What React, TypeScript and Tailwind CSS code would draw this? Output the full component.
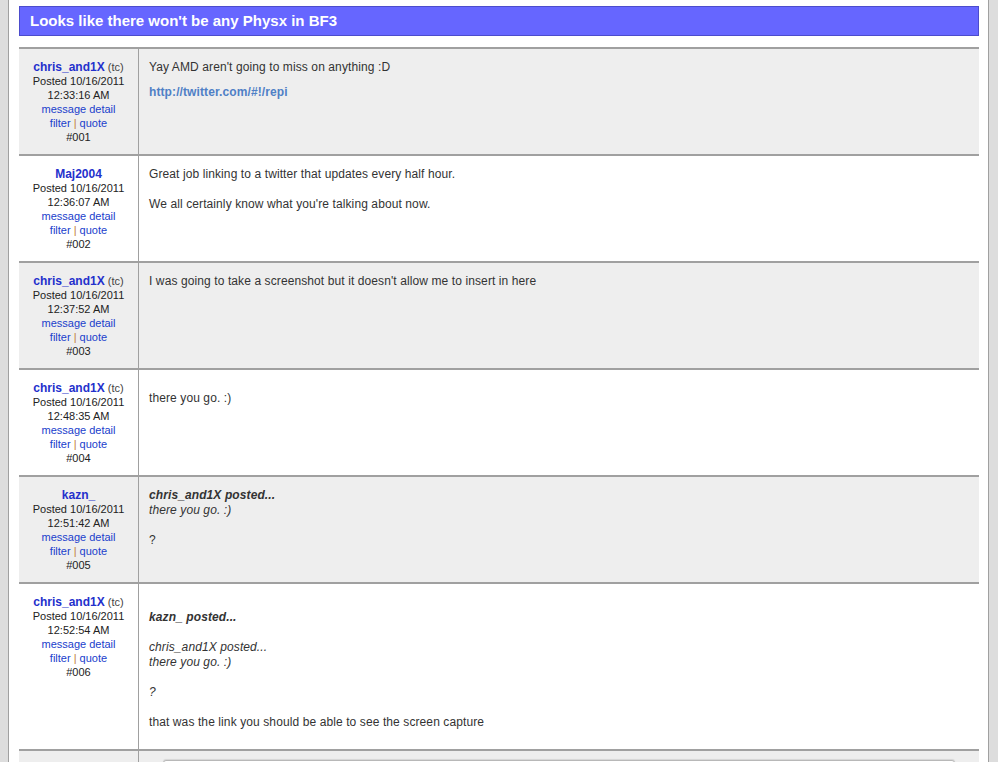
import type { ReactNode } from 'react';

type Post = {
    user: string;
    tc?: boolean;
    date: string;
    time: string;
    num: string;
    height: string;
    body: ReactNode;
};

const posts: Post[] = [
    {
        user: 'chris_and1X',
        tc: true,
        date: '10/16/2011',
        time: '12:33:16 AM',
        num: '#001',
        height: 'h-[107px]',
        body: (
            <>
                <div>Yay AMD aren't going to miss on anything :D</div>
                <div className="mt-[10px]">
                    <a href="#" className="font-bold text-[#4f80c6]">
                        http://twitter.com/#!/repi
                    </a>
                </div>
            </>
        ),
    },
    {
        user: 'Maj2004',
        date: '10/16/2011',
        time: '12:36:07 AM',
        num: '#002',
        height: 'h-[107px]',
        body: (
            <>
                Great job linking to a twitter that updates every half hour.
                <br />
                <br />
                We all certainly know what you're talking about now.
            </>
        ),
    },
    {
        user: 'chris_and1X',
        tc: true,
        date: '10/16/2011',
        time: '12:37:52 AM',
        num: '#003',
        height: 'h-[107px]',
        body: <>I was going to take a screenshot but it doesn't allow me to insert in here</>,
    },
    {
        user: 'chris_and1X',
        tc: true,
        date: '10/16/2011',
        time: '12:48:35 AM',
        num: '#004',
        height: 'h-[107px]',
        body: <div className="pt-[10px]">there you go. :)</div>,
    },
    {
        user: 'kazn_',
        date: '10/16/2011',
        time: '12:51:42 AM',
        num: '#005',
        height: 'h-[107px]',
        body: (
            <>
                <b className="italic">chris_and1X posted...</b>
                <br />
                <i>there you go. :)</i>
                <br />
                <br />?
            </>
        ),
    },
    {
        user: 'chris_and1X',
        tc: true,
        date: '10/16/2011',
        time: '12:52:54 AM',
        num: '#006',
        height: 'h-[167px]',
        body: (
            <>
                <br />
                <b className="italic">kazn_ posted...</b>
                <br />
                <br />
                <i>chris_and1X posted...</i>
                <br />
                <i>there you go. :)</i>
                <br />
                <br />
                <i>?</i>
                <br />
                <br />
                that was the link you should be able to see the screen capture
            </>
        ),
    },
];

function PostRow({ post, shaded }: { post: Post; shaded: boolean }) {
    return (
        <div
            className={`flex border-t-2 border-[#a0a0a0] ${post.height} ${
                shaded ? 'bg-[#eeeeee]' : 'bg-white'
            }`}
        >
            {/* author column */}
            <div className="w-[120px] shrink-0 border-r border-[#a0a0a0] pt-[11px] text-center text-[11px] leading-[14px] text-[#222]">
                <div>
                    <a href="#" className="text-[12px] font-bold text-[#2430cc]">
                        {post.user}
                    </a>
                    {post.tc && <span className="text-[#444]"> (tc)</span>}
                </div>
                <div>Posted {post.date}</div>
                <div>{post.time}</div>
                <div>
                    <a href="#" className="text-[#2040cc]">
                        message detail
                    </a>
                </div>
                <div>
                    <a href="#" className="text-[#2040cc]">
                        filter
                    </a>
                    <span className="text-[#c08040]"> | </span>
                    <a href="#" className="text-[#2040cc]">
                        quote
                    </a>
                </div>
                <div>{post.num}</div>
            </div>

            {/* message body */}
            <div className="flex-1 pl-[10px] pt-[11px] text-[12px] leading-[15px] tracking-[0.1px] text-[#333]">
                {post.body}
            </div>
        </div>
    );
}

export default function App() {
    return (
        <div
            className="flex h-[762px] overflow-hidden bg-white"
            style={{ fontFamily: '"Liberation Sans", Arial, sans-serif' }}
        >
            <div className="w-[9px] shrink-0 border-r border-[#a0a0a0] bg-[#dddddd]" />

            <div className="flex-1 pl-[10px] pr-[9px] pt-[6px]">
                <div className="flex h-[30px] items-center border border-[#4c4ccc] bg-[#6666ff] pl-[10px] text-[15px] font-bold text-white">
                    Looks like there won't be any Physx in BF3
                </div>

                <div className="mt-[11px]">
                    {posts.map((p, i) => (
                        <PostRow key={p.num} post={p} shaded={i % 2 === 0} />
                    ))}

                    {/* next post, cut off at the bottom */}
                    <div className="flex h-[60px] border-t-2 border-[#a0a0a0] bg-[#eeeeee]">
                        <div className="w-[120px] shrink-0 border-r border-[#a0a0a0]" />
                        <div className="flex-1 pl-[24px] pr-[24px] pt-[9px]">
                            <div className="h-[40px] rounded-t-[3px] border border-[#b8b8b8] bg-white shadow-[0_-1px_1px_rgba(0,0,0,0.1)]" />
                        </div>
                    </div>
                </div>
            </div>

            <div className="w-[10px] shrink-0 border-l border-[#a0a0a0] bg-[#dddddd]" />
        </div>
    );
}
